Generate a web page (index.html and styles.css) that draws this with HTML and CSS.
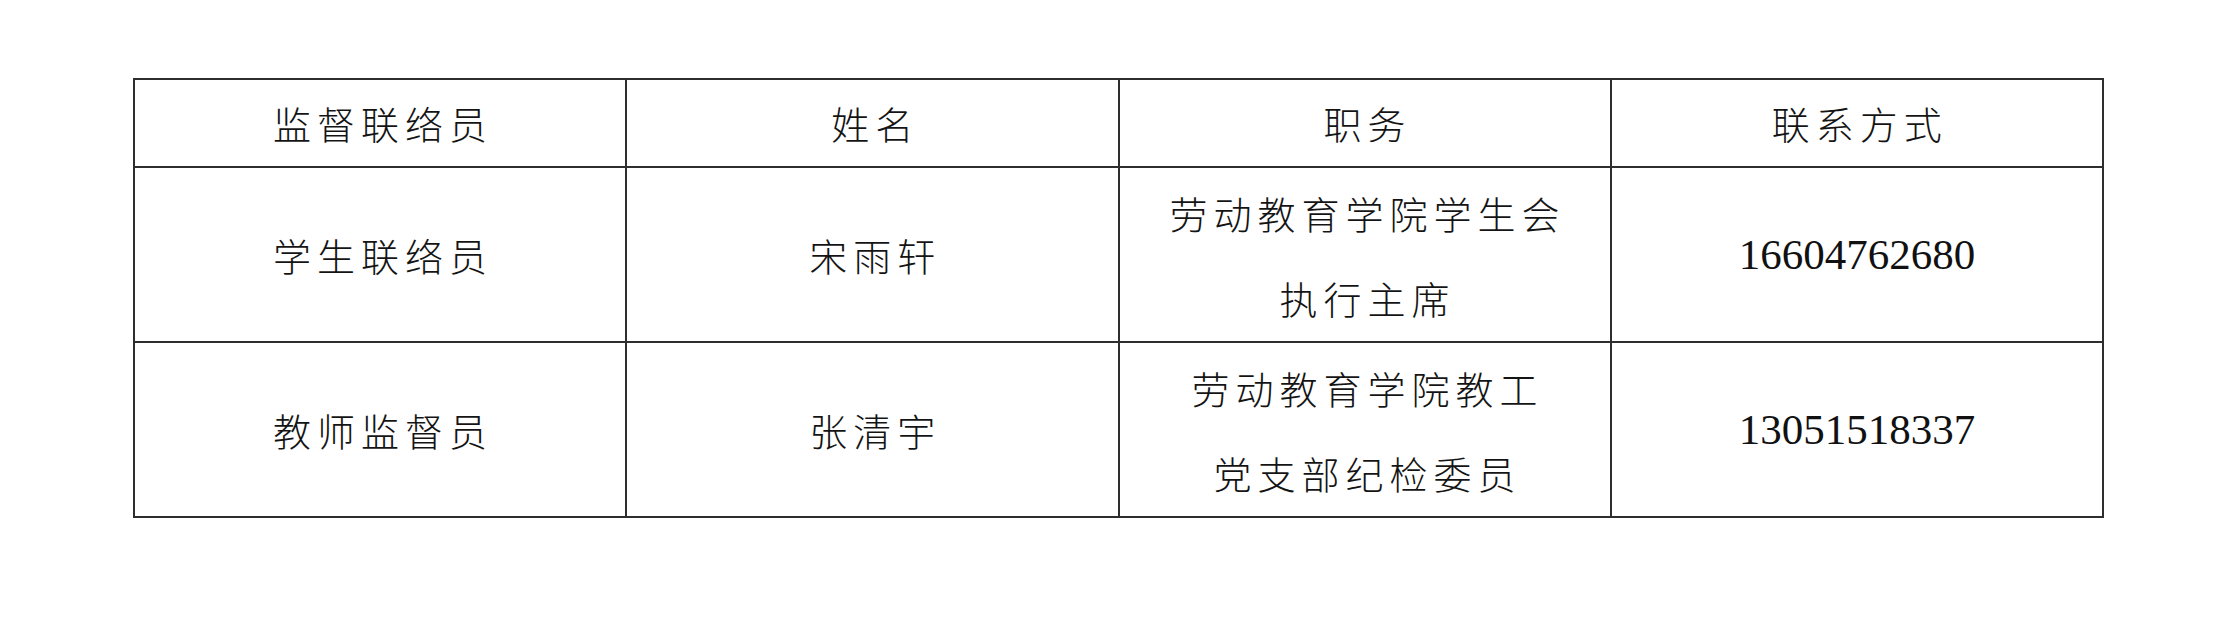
FILE: index.html
```html
<!DOCTYPE html>
<html lang="zh-CN">
<head>
<meta charset="utf-8">
<title>监督联络员</title>
<link rel="stylesheet" href="styles.css">
</head>
<body>
<div class="page">
  <table class="grid">
    <colgroup><col><col><col><col></colgroup>
    <tr class="head">
      <td>监督联络员</td>
      <td>姓名</td>
      <td>职务</td>
      <td>联系方式</td>
    </tr>
    <tr class="row">
      <td>学生联络员</td>
      <td>宋雨轩</td>
      <td>劳动教育学院学生会<br>执行主席</td>
      <td class="num">16604762680</td>
    </tr>
    <tr class="row">
      <td>教师监督员</td>
      <td>张清宇</td>
      <td>劳动教育学院教工<br>党支部纪检委员</td>
      <td class="num">13051518337</td>
    </tr>
  </table>
</div>
</body>
</html>
```

FILE: styles.css
```css
html, body {
  margin: 0;
  padding: 0;
  background: #ffffff;
}

.page {
  padding: 78px 0 0 133px;
}

.grid {
  border-collapse: collapse;
  width: 1971px;
  table-layout: fixed;
  color: #141414;
  font-family: "Noto Sans CJK SC", "Noto Sans CJK JP", sans-serif;
  font-weight: 300;
  font-size: 38px;
}

.grid td {
  border: 2px solid #2e2e2e;
  text-align: center;
  vertical-align: middle;
  padding: 0 0 0 6px;
  letter-spacing: 6px;
  line-height: 85px;
}

.head td {
  height: 86px;
  line-height: 50px;
}

.row td {
  height: 173px;
}

.grid td.num {
  font-family: "Liberation Serif", "Times New Roman", serif;
  font-weight: 400;
  font-size: 43px;
  letter-spacing: 0;
  padding: 0;
  color: #111;
}
```
